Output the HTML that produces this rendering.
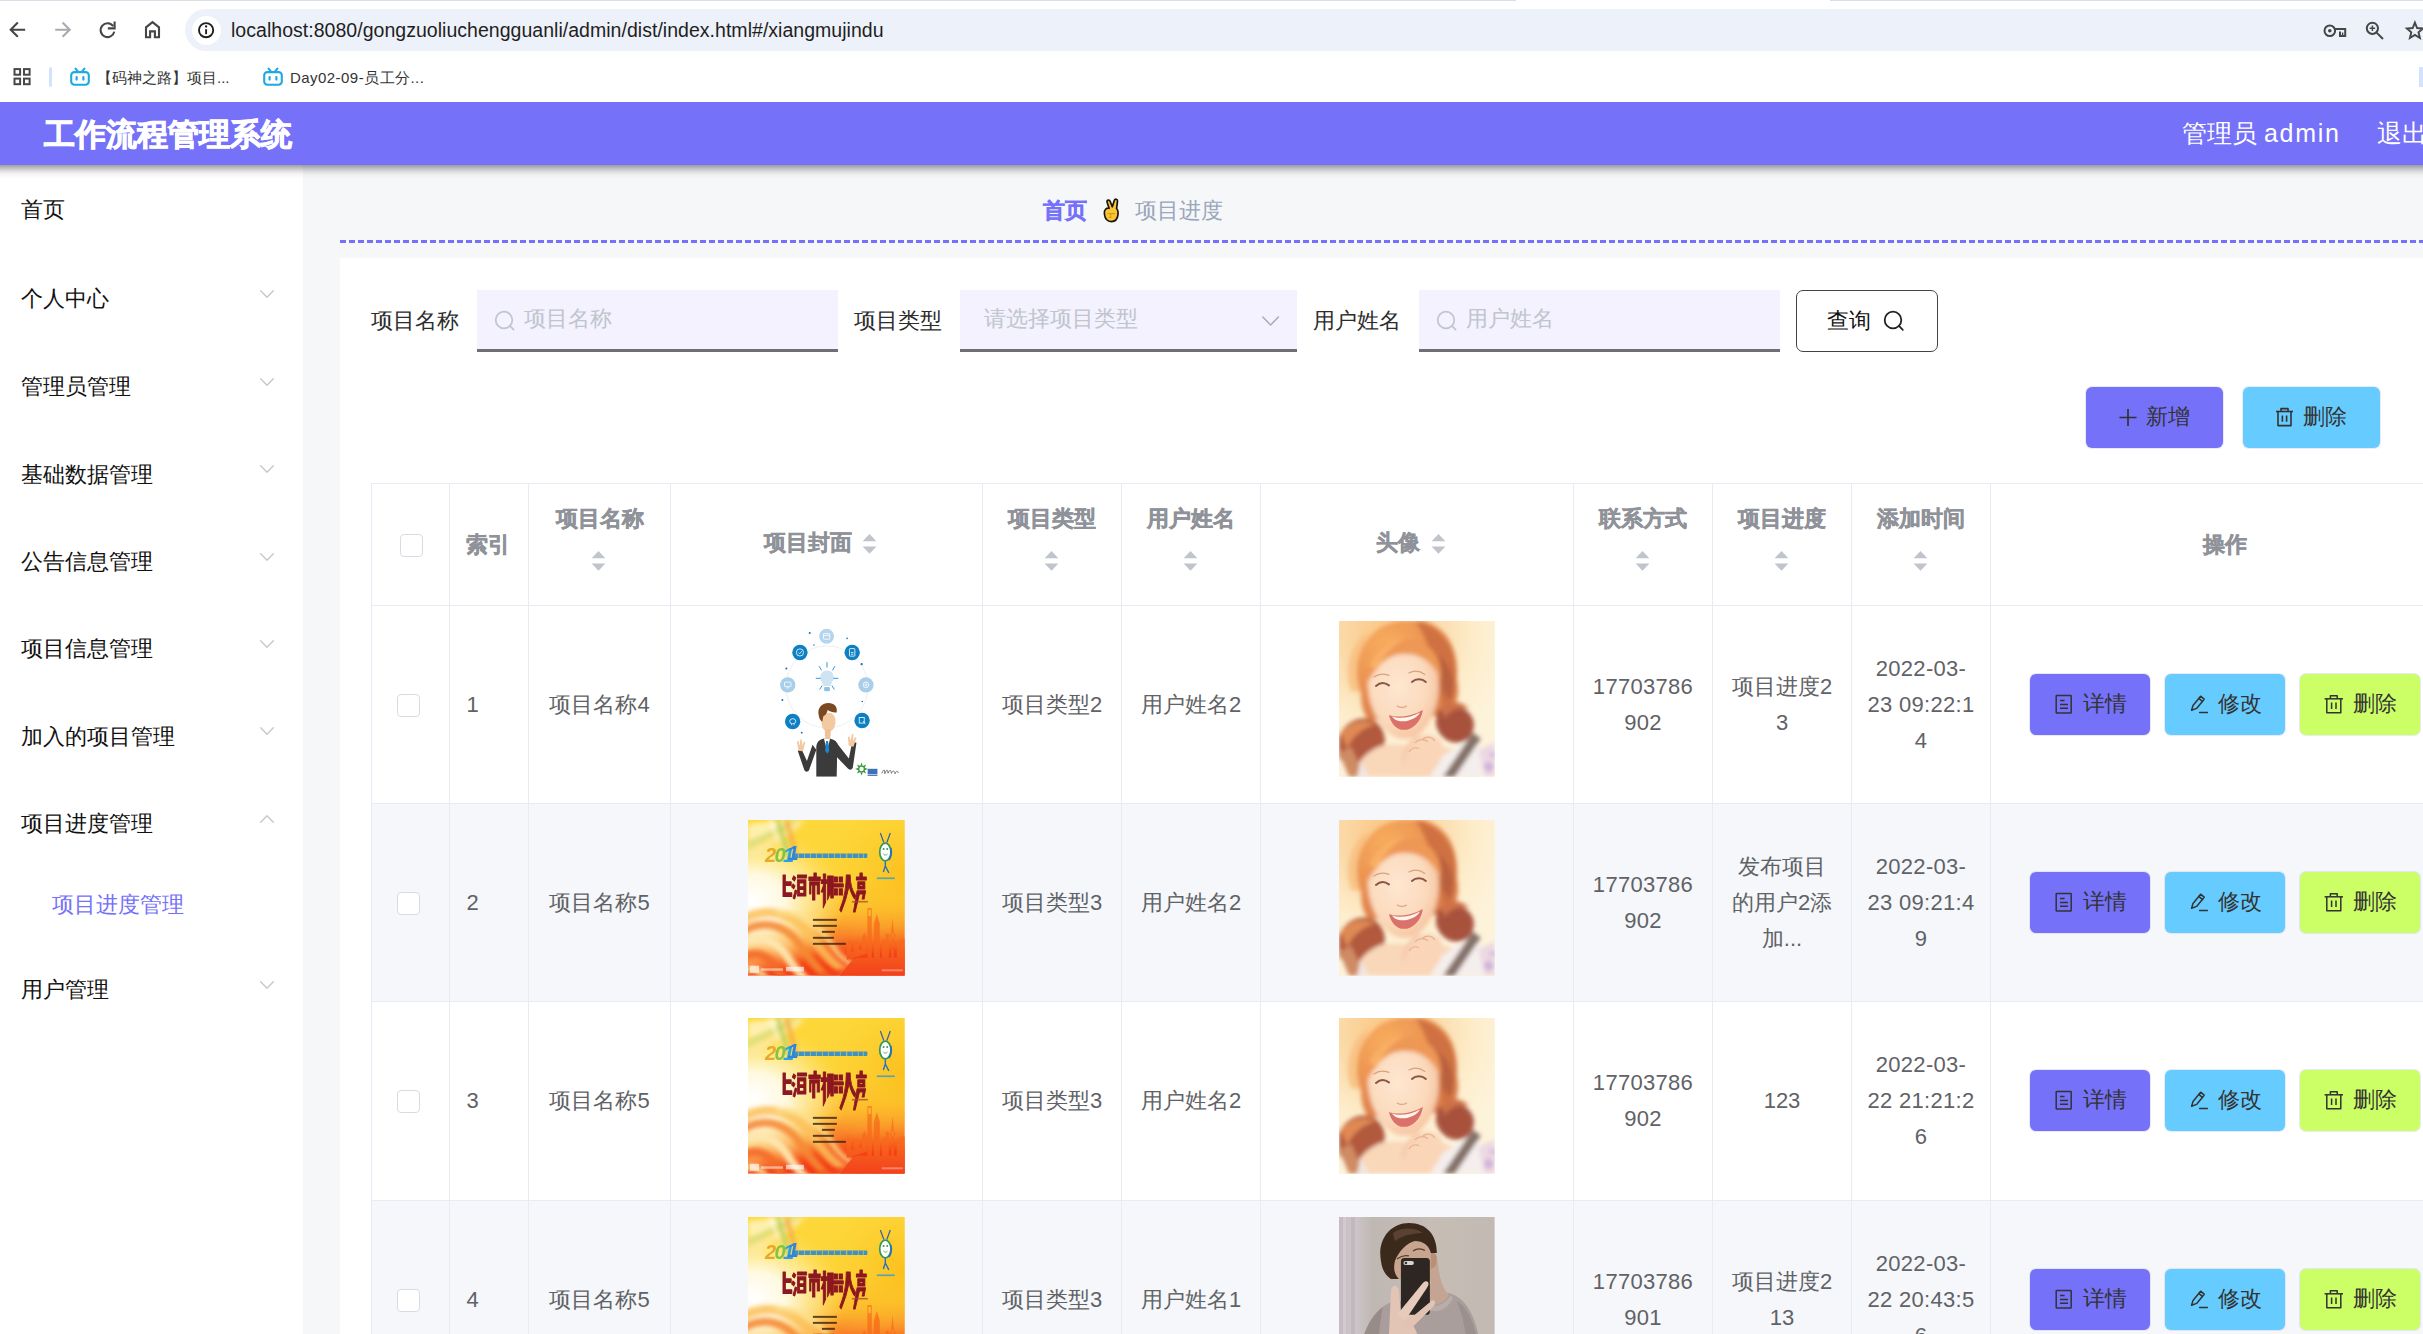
<!DOCTYPE html>
<html lang="zh">
<head>
<meta charset="utf-8">
<title>工作流程管理系统</title>
<style>
*{box-sizing:border-box;margin:0;padding:0}
html,body{width:2423px;height:1334px;overflow:hidden;background:#fff}
body{position:relative;font-family:"Liberation Sans",sans-serif;color:#333;-webkit-font-smoothing:antialiased}
.abs{position:absolute}
svg{display:block;overflow:visible}
/* ---------- browser chrome ---------- */
#topline{left:0;top:0;width:2423px;height:1px;background:#d9dde6}
#tabgap{left:1516px;top:0;width:314px;height:2px;background:#fff}
#omni{left:185px;top:9px;width:2300px;height:42px;border-radius:21px;background:#edf1fa}
#infoc{left:191.5px;top:15.5px;width:29px;height:29px;border-radius:15px;background:#fff}
#url{left:231px;top:17px;height:26px;line-height:26px;font-size:19.5px;color:#1f1f1f;white-space:nowrap;letter-spacing:0.03px}
.bm{top:67px;height:22px;line-height:22px;font-size:15px;color:#333;white-space:nowrap}
#bmsep{left:49px;top:67px;width:3px;height:20px;background:#d3e3fd;border-radius:2px}
#bmright{left:2419px;top:67px;width:6px;height:20px;background:#d3e3fd}
/* ---------- app header ---------- */
#hdr{left:-30px;top:102px;width:2483px;height:63px;background:#7571f9;box-shadow:0 1px 10px 1px rgba(0,0,0,.58);clip-path:inset(0 0 -40px 0);z-index:5}
#title{left:73.5px;top:1px;height:63px;line-height:64px;font-size:30.8px;font-weight:bold;color:#fff;white-space:nowrap;-webkit-text-stroke:0.9px #fff}
#user{left:2212px;top:1px;height:63px;line-height:61px;font-size:25px;color:#fff;white-space:nowrap}
#logout{left:2407px;top:1px;height:63px;line-height:61px;font-size:25px;color:#fff;white-space:nowrap}
/* ---------- sidebar ---------- */
#side{left:0;top:165px;width:303px;height:1169px;background:#fff}
.mi{left:21px;height:40px;line-height:40px;font-size:22px;color:#111;white-space:nowrap}
.mi.sub{left:52px;color:#7571f9}
.chev{left:260px;width:14px;height:8px}
/* ---------- main ---------- */
#main{left:303px;top:165px;width:2120px;height:1169px;background:#f6f7f9}
#crumb1{left:1043px;top:193px;height:36px;line-height:36px;font-size:22px;font-weight:bold;color:#7571f9;white-space:nowrap;-webkit-text-stroke:0.4px #7571f9}
#crumb2{left:1135px;top:193px;height:36px;line-height:36px;font-size:22px;color:#9aa6b9;white-space:nowrap}
#dash{left:340px;top:239.5px;width:2083px;height:3.5px;background:repeating-linear-gradient(90deg,#7571f9 0 6px,transparent 6px 9px)}
#card{left:340px;top:258px;width:2083px;height:1076px;background:#fff}
.lbl{top:301px;height:40px;line-height:40px;font-size:22px;color:#2c2c2c;white-space:nowrap}
.inp{top:290px;height:62px;background:#f3f2fe;border-bottom:3.2px solid #6f6f73}
.ph{top:299px;height:40px;line-height:40px;font-size:22px;color:#c0c4cc;white-space:nowrap}
#qbtn{left:1796px;top:290px;width:142px;height:62px;border:1.5px solid #444;border-radius:7px;background:#fff}
#qtxt{left:1827px;top:301px;height:40px;line-height:40px;font-size:22px;color:#111;white-space:nowrap}
.bigbtn{top:387px;width:136.5px;height:61px;border-radius:6px;box-shadow:0 0 0 1px rgba(190,195,235,.35)}
.bigtxt{top:397px;height:40px;line-height:40px;font-size:22px;color:#333;white-space:nowrap}
/* ---------- table ---------- */
#tbl{left:371px;top:484px;width:2060px;height:860px;border-top:1.5px solid #e9ebf5;border-left:1.5px solid #e9ebf5;background:#fff}
.row{left:371px;width:2060px;border-bottom:1.5px solid #e9ebf5}
.stripe{background:#f5f7fa}
.vl{top:483px;width:1px;height:860px;background:#e8eaf4}
.hl{left:371px;width:2060px;height:1px;background:#e8eaf4}
.th{height:34px;line-height:34px;font-size:22px;font-weight:bold;color:#8f9298;text-align:center;white-space:nowrap;-webkit-text-stroke:0.45px #8f9298}
.td{font-size:22px;color:#5f6266;text-align:center;line-height:36px;white-space:nowrap}
.cb{width:23px;height:23px;border:1.5px solid #d8dbe3;border-radius:4px;background:#fff}
.sort{width:14px;height:24px}
.ab{width:120px;height:61px;border-radius:6px;box-shadow:0 0 0 1px rgba(190,195,235,.35)}
.abt{height:40px;line-height:40px;font-size:22px;color:#333;white-space:nowrap}
.img{width:157px;height:157px;overflow:hidden}
</style>
</head>
<body>
<!-- ======= browser chrome ======= -->
<div class="abs" id="topline"></div><div class="abs" id="tabgap"></div>
<div class="abs" id="omni"></div>
<div class="abs" id="infoc"></div>
<div class="abs" id="url">localhost:8080/gongzuoliuchengguanli/admin/dist/index.html#/xiangmujindu</div>
<div class="abs" id="bmsep"></div><div class="abs" id="bmright"></div>
<div class="abs bm" style="left:97px">【码神之路】项目...</div>
<div class="abs bm" style="left:290px;letter-spacing:0.45px">Day02-09-员工分...</div>
<svg class="abs" style="left:0;top:0" width="2423" height="100" viewBox="0 0 2423 100" fill="none" stroke-linecap="butt" stroke-linejoin="miter">
  <!-- back -->
  <path d="M25.2 29.7H11.2M17.8 22.6L10.7 29.7L17.8 36.8" stroke="#444746" stroke-width="2.1"/>
  <!-- forward (disabled) -->
  <path d="M55.2 29.7H69.2M62.6 22.6L69.7 29.7L62.6 36.8" stroke="#a8abb0" stroke-width="2.1"/>
  <!-- reload -->
  <path d="M113.2 26.2A6.9 6.9 0 1 0 114.3 31.6" stroke="#444746" stroke-width="2.1"/>
  <path d="M114.6 21.6V28.4H107.8" stroke="#444746" stroke-width="2.1"/>
  <!-- home -->
  <path d="M146 37.2V27.3L152.5 22.2L159 27.3V37.2H154.9V31.4H150.1V37.2Z" stroke="#444746" stroke-width="2.1"/>
  <!-- info -->
  <circle cx="206.1" cy="30.2" r="7.1" stroke="#1f1f1f" stroke-width="1.9"/>
  <path d="M206.1 29.2V34.2" stroke="#1f1f1f" stroke-width="1.9"/>
  <circle cx="206.1" cy="26.5" r="1.15" fill="#1f1f1f"/>
  <!-- key -->
  <circle cx="2329.8" cy="30.8" r="5.3" stroke="#444746" stroke-width="2"/>
  <circle cx="2329.8" cy="30.8" r="1.8" fill="#444746"/>
  <path d="M2335 29H2345.2V36H2340V31.5" stroke="#444746" stroke-width="2"/>
  <path d="M2342.6 32.5V36" stroke="#444746" stroke-width="1.4"/>
  <!-- zoom -->
  <circle cx="2372.4" cy="28.3" r="5.6" stroke="#444746" stroke-width="2"/>
  <path d="M2376.6 32.6L2383 39" stroke="#444746" stroke-width="2"/>
  <path d="M2369.6 28.3H2375.2M2372.4 25.5V31.1" stroke="#444746" stroke-width="1.5"/>
  <!-- star -->
  <path d="M2414.9 22.6L2417.1 28L2422.9 28.5L2418.5 32.3L2419.9 38L2414.9 34.9L2409.9 38L2411.3 32.3L2406.9 28.5L2412.7 28Z" stroke="#444746" stroke-width="1.9" stroke-linejoin="miter"/>
  <!-- apps grid -->
  <g stroke="#474747" stroke-width="2">
    <rect x="14.5" y="69.1" width="5.6" height="5.6"/><rect x="24" y="69.1" width="5.6" height="5.6"/>
    <rect x="14.5" y="78.6" width="5.6" height="5.6"/><rect x="24" y="78.6" width="5.6" height="5.6"/>
  </g>
  <!-- bilibili icons -->
  <g id="bili" stroke="#1fa9e1" stroke-width="2.1">
    <rect x="71.2" y="72.1" width="17.6" height="12.6" rx="3.2"/>
    <path d="M75.6 68.6L78 71.6M84.4 68.6L82 71.6" stroke-linecap="round"/>
    <path d="M76.6 77V79.6M83.4 77V79.6" stroke-width="2.2" stroke-linecap="round"/>
  </g>
  <g stroke="#1fa9e1" stroke-width="2.1" transform="translate(193 0)">
    <rect x="71.2" y="72.1" width="17.6" height="12.6" rx="3.2"/>
    <path d="M75.6 68.6L78 71.6M84.4 68.6L82 71.6" stroke-linecap="round"/>
    <path d="M76.6 77V79.6M83.4 77V79.6" stroke-width="2.2" stroke-linecap="round"/>
  </g>
</svg>

<!-- ======= app ======= -->
<div class="abs" id="side"></div>
<div class="abs" id="main"></div>
<div class="abs" id="hdr">
  <div class="abs" id="title">工作流程管理系统</div>
  <div class="abs" id="user">管理员 <span style="letter-spacing:1.7px">admin</span></div>
  <div class="abs" id="logout">退出</div>
</div>
<div class="abs mi" style="top:190.1px">首页</div>
<div class="abs mi" style="top:279.0px">个人中心</div>
<svg class="abs chev" style="top:289.9px" viewBox="0 0 14 8" fill="none"><path d="M0.7 0.7L7 7.2L13.3 0.7" stroke="#c3c6cc" stroke-width="1.3" stroke-linecap="round" stroke-linejoin="round"/></svg>
<div class="abs mi" style="top:367.0px">管理员管理</div>
<svg class="abs chev" style="top:377.9px" viewBox="0 0 14 8" fill="none"><path d="M0.7 0.7L7 7.2L13.3 0.7" stroke="#c3c6cc" stroke-width="1.3" stroke-linecap="round" stroke-linejoin="round"/></svg>
<div class="abs mi" style="top:454.5px">基础数据管理</div>
<svg class="abs chev" style="top:465.4px" viewBox="0 0 14 8" fill="none"><path d="M0.7 0.7L7 7.2L13.3 0.7" stroke="#c3c6cc" stroke-width="1.3" stroke-linecap="round" stroke-linejoin="round"/></svg>
<div class="abs mi" style="top:542.1px">公告信息管理</div>
<svg class="abs chev" style="top:553.0px" viewBox="0 0 14 8" fill="none"><path d="M0.7 0.7L7 7.2L13.3 0.7" stroke="#c3c6cc" stroke-width="1.3" stroke-linecap="round" stroke-linejoin="round"/></svg>
<div class="abs mi" style="top:629.0px">项目信息管理</div>
<svg class="abs chev" style="top:639.9px" viewBox="0 0 14 8" fill="none"><path d="M0.7 0.7L7 7.2L13.3 0.7" stroke="#c3c6cc" stroke-width="1.3" stroke-linecap="round" stroke-linejoin="round"/></svg>
<div class="abs mi" style="top:716.5px">加入的项目管理</div>
<svg class="abs chev" style="top:727.4px" viewBox="0 0 14 8" fill="none"><path d="M0.7 0.7L7 7.2L13.3 0.7" stroke="#c3c6cc" stroke-width="1.3" stroke-linecap="round" stroke-linejoin="round"/></svg>
<div class="abs mi" style="top:803.7px">项目进度管理</div>
<svg class="abs chev" style="top:814.6px" viewBox="0 0 14 8" fill="none"><path d="M0.7 7.2L7 0.7L13.3 7.2" stroke="#c3c6cc" stroke-width="1.3" stroke-linecap="round" stroke-linejoin="round"/></svg>
<div class="abs mi sub" style="top:884.9px">项目进度管理</div>
<div class="abs mi" style="top:970.2px">用户管理</div>
<svg class="abs chev" style="top:981.1px" viewBox="0 0 14 8" fill="none"><path d="M0.7 0.7L7 7.2L13.3 0.7" stroke="#c3c6cc" stroke-width="1.3" stroke-linecap="round" stroke-linejoin="round"/></svg>
<!-- breadcrumb -->
<div class="abs" id="crumb1">首页</div>
<svg class="abs" style="left:1100px;top:197px" width="22" height="27" viewBox="0 0 22 27">
  <path d="M4.400 17C3.600 12.600 6.800 10.600 9.100 11.300L7.100 5.300C6.500 3 9.300 2.200 10.100 4.300L12.300 9.800L14.300 3.600C15 1.400 17.900 2 17.500 4.300L16.600 11.500C18 12.800 18.300 15 17.900 18.200C17.400 22.200 14.800 24.600 11.400 24.600C7.600 24.600 5 21.800 4.400 17Z" fill="#fbc634" stroke="#17130c" stroke-width="1.700" stroke-linejoin="round"/>
  <path d="M7.400 16.600H15.200M10.800 16.600V20.400H8.600" fill="none" stroke="#d69a1a" stroke-width="1.100"/>
</svg>
<div class="abs" id="crumb2">项目进度</div>
<div class="abs" id="dash"></div>
<div class="abs" id="card"></div>
<!-- search form -->
<div class="abs lbl" style="left:371px">项目名称</div>
<div class="abs inp" style="left:477px;width:361px"></div>
<div class="abs ph" style="left:524px">项目名称</div>
<div class="abs lbl" style="left:854px">项目类型</div>
<div class="abs inp" style="left:960px;width:337px"></div>
<div class="abs ph" style="left:984px">请选择项目类型</div>
<div class="abs lbl" style="left:1313px">用户姓名</div>
<div class="abs inp" style="left:1419px;width:361px"></div>
<div class="abs ph" style="left:1466px">用户姓名</div>
<div class="abs" id="qbtn"></div>
<div class="abs" id="qtxt">查询</div>
<div class="abs bigbtn" style="left:2086px;background:#7571f9"></div>
<div class="abs bigtxt" style="left:2146px">新增</div>
<div class="abs bigbtn" style="left:2243px;background:#66ccff"></div>
<div class="abs bigtxt" style="left:2303px">删除</div>
<svg class="abs" style="left:340px;top:258px" width="2083" height="220" viewBox="340 258 2083 220" fill="none">
  <!-- search icons in inputs -->
  <g stroke="#c0c4cc" stroke-width="1.7" stroke-linecap="round">
    <circle cx="504" cy="320" r="8.3"/><path d="M510.2 326.2L513.6 329.6"/>
    <circle cx="1446" cy="320" r="8.3"/><path d="M1452.2 326.2L1455.6 329.6"/>
  </g>
  <!-- select arrow -->
  <path d="M1262.8 317L1270.6 325L1278.4 317" stroke="#a9adb6" stroke-width="1.6" stroke-linecap="round" stroke-linejoin="round"/>
  <!-- query icon -->
  <g stroke="#222" stroke-width="1.8" stroke-linecap="round">
    <circle cx="1893" cy="320" r="8.3"/><path d="M1899.2 326.2L1902.8 329.8"/>
  </g>
  <!-- plus -->
  <path d="M2119.5 417.5H2136.5M2128 409V426" stroke="#333" stroke-width="1.7"/>
  <!-- trash -->
  <g stroke="#333" stroke-width="1.6" stroke-linejoin="round">
    <path d="M2276 411.5H2293"/><path d="M2281 411.2V408.6H2288V411.2"/>
    <path d="M2278 411.8V425.6H2291V411.8"/><path d="M2282.4 415.4V421.8M2286.6 415.4V421.8"/>
  </g>
</svg>

<svg width="0" height="0" style="position:absolute">
<defs>
  <g id="ic-doc" stroke="#333" stroke-width="1.5" stroke-linejoin="round"><rect x="1.2" y="1.4" width="15" height="17.6" rx="0.6"/><path d="M5 6.6H9.600M5 10.400H13M5 14.300H13"/></g>
  <g id="ic-edit" stroke="#333" stroke-width="1.5" stroke-linejoin="round" stroke-linecap="round"><path d="M1.6 16.2L3 11.4L10.6 2.2L14.2 5.2L6.6 14.4Z"/><path d="M8.8 4.4L12.4 7.4"/><path d="M9.6 18.6H17.4"/></g>
  <g id="ic-trash" stroke="#333" stroke-width="1.5" stroke-linejoin="round"><path d="M0.6 4.800H19"/><path d="M6.400 4.600V1.800H13.200V4.600"/><path d="M2.800 5V18.800H16.800V5"/><path d="M7.600 8.400V15M12 8.400V15"/></g>
  <filter id="b1" x="-10%" y="-10%" width="120%" height="120%"><feGaussianBlur stdDeviation="0.6"/></filter>
  <filter id="b2" x="-20%" y="-20%" width="140%" height="140%"><feGaussianBlur stdDeviation="2"/></filter>
  <filter id="b4" x="-30%" y="-30%" width="160%" height="160%"><feGaussianBlur stdDeviation="4.5"/></filter>
  <filter id="b8" x="-50%" y="-50%" width="200%" height="200%"><feGaussianBlur stdDeviation="9"/></filter>
  <clipPath id="c157"><rect width="157" height="156"/></clipPath>
  <clipPath id="c156"><rect width="156" height="156"/></clipPath>
    <g id="imgA" clip-path="url(#c157)">
    <rect width="157" height="156" fill="#fff"/>
    <g filter="url(#b1)">
    <circle cx="79" cy="66" r="41" fill="none" stroke="#e6ebf0" stroke-width="0.8"/>
    <circle cx="78.7" cy="15.3" r="7.5" fill="#b4d5ed"/>
    <circle cx="52" cy="31.5" r="7.7" fill="#0a7fc3"/>
    <circle cx="104.3" cy="31.5" r="7.7" fill="#0a7fc3"/>
    <circle cx="39.8" cy="63.9" r="7.7" fill="#a8cee9"/>
    <circle cx="118.1" cy="63.9" r="7.7" fill="#a8cee9"/>
    <circle cx="44.7" cy="100.6" r="7.7" fill="#0a7fc3"/>
    <circle cx="114.2" cy="99.6" r="7.7" fill="#0a7fc3"/>
    <g fill="none" stroke="#fff" stroke-width="0.9" opacity=".9">
      <circle cx="52" cy="31.5" r="3.6"/><path d="M50.6 31.6L51.8 32.8L53.8 30.2"/>
      <rect x="101.6" y="27.6" width="5.4" height="7.6" rx="0.6"/><path d="M103 31.5H105.6M103 33.3H105.6"/>
      <rect x="75.6" y="12.6" width="6.2" height="5.6" rx="0.5"/><path d="M75.6 14.4H81.8"/>
      <rect x="36.6" y="61.2" width="6.4" height="4.6" rx="0.5"/><path d="M38.6 67H41"/>
      <circle cx="118.1" cy="63.9" r="2.8"/><circle cx="118.1" cy="63.9" r="1"/>
      <path d="M41.8 100.4a3 2.6 0 1 0 6 0a3 2.6 0 1 0 -6 0M43.6 103.4V104.4M46.2 103.4V104.4"/>
      <rect x="111.4" y="96.6" width="5" height="5.6"/><path d="M115.2 100.2L117.4 103"/>
    </g>
    <g fill="#1a6fb0"><circle cx="61.8" cy="12" r="1"/><circle cx="99.2" cy="17.4" r="0.8"/><circle cx="38.4" cy="47.6" r="1"/><circle cx="113.8" cy="43.2" r="1.1"/><circle cx="34.4" cy="79" r="1"/><circle cx="114.4" cy="80.6" r="0.8"/><circle cx="53.8" cy="111.8" r="0.9"/><circle cx="66" cy="24" r="0.7"/></g>
    <!-- bulb -->
    <path d="M79.1 49.5c4.6 0 6.8 3.4 6.8 7c0 3.6-2.8 5.2-3.2 8.6h-7.2c-.4-3.4-3.2-5-3.2-8.6c0-3.6 2.2-7 6.800-7z" fill="#cfe4f3"/>
    <rect x="76.2" y="66" width="5.8" height="4.4" rx="1.2" fill="#8ec3e6"/>
    <g stroke="#2a9bd8" stroke-width="1" stroke-linecap="round"><path d="M79.1 41.600v4.600M71.300 45.500l2.200 3.600M86.900 45.500l-2.200 3.600M68.200 57.400h4.200M85.800 57.400h4.200M72 68.200l2-3.200M86.200 68.200l-2-3.200"/></g>
    <!-- man -->
    <path d="M68.400 156l0-30c.4-5 3.400-7.600 7.600-8.400l4.600 0c5.200.6 8.200 2.600 9.600 6.400l10.800 13.600l3.400-16.800l4.200 1l-3.600 24.600c-.6 2.600-3.200 3.200-5 1.400l-10.800-11.400l-.4 19.600z" fill="#3a3a3a"/>
    <path d="M68.400 128.800l-7.200 20.400c-1 2.200-3.800 2.200-4.800 0l-6.600-19.200l4-1.400l5.200 11.600l5.600-16.400z" fill="#3a3a3a"/>
    <path d="M76 117.600l3.200 12.400l3-12.400z" fill="#fff"/><path d="M78.200 120.200l-1 9.800l2.200 2.800l2-2.800l-1.200-9.800z" fill="#1a86c8"/>
    <g transform="translate(0 -3)"><path d="M73.600 104c0 6 2.400 9.800 6.800 9.800c4.200 0 7.200-4.200 7.200-10.400c0-5.600-3-8.600-7.200-8.600c-4.400 0-6.800 3.400-6.800 9.200z" fill="#f3c9a1"/>
    <rect x="77" y="111.600" width="5.600" height="6.800" fill="#f0c097"/>
    <path d="M70.800 97.400c-1.600-7.200 3-12.200 9.600-12.200c6.200 0 9.400 3.800 8.400 9.400c-3.200.4-6.600-.6-9-2.400c-.6 3.400-2.800 5.600-4.400 6.200l-1 5.400c-2.400-1-3.200-3.600-3.600-6.400z" fill="#7a4a22"/></g><rect x="77.400" y="109" width="5" height="9" fill="#f0c097"/>
    <path d="M50.600 130l-1.800-9.400l1.600-.4l1.400 4.600l.6-6.200l1.600 0l.4 6.200l1.600-4.200l1.400.6l-2.200 9.200z" fill="#f3c9a1"/>
    <path d="M100.800 125l-.8-9.200l1.600-.2l1 4.400l1.400-6.800l1.600.2l-.4 6.800l2-4l1.400.8l-3 9z" fill="#f3c9a1"/>
    <!-- logo -->
    <path d="M113.700 141.800l1.300 3.300l3.300-1.500l-1.500 3.300l3.300 1.300l-3.300 1.300l1.500 3.300l-3.300-1.500l-1.300 3.300l-1.300-3.300l-3.300 1.500l1.500-3.300l-3.300-1.300l3.300-1.300l-1.500-3.300l3.300 1.500z" fill="#3a9a3a"/><circle cx="113.700" cy="148.200" r="2.200" fill="#fff"/>
    <rect x="119.800" y="148" width="9.800" height="5.600" fill="#3f6fb8"/><rect x="119.800" y="154.200" width="9.800" height="0.900" fill="#3f6fb8"/>
    <path d="M134 152.600c2-5 3-4.600 3 .4c1.600-4.600 3-4.800 3.200-.6c1.600-4 3-3.600 3.400.2c1.400-3.400 3-3.400 3.600.4c1.200-3.200 2.600-3.400 3.400-.8" fill="none" stroke="#6a6a6a" stroke-width="0.9"/>
    </g>
  </g>

    <linearGradient id="gB1" x1="0" y1="0" x2="0.18" y2="1"><stop offset="0" stop-color="#fdd93c"/><stop offset=".5" stop-color="#fdd236"/><stop offset=".68" stop-color="#fcb82e"/><stop offset=".82" stop-color="#f9852a"/><stop offset=".93" stop-color="#f5501a"/><stop offset="1" stop-color="#f23a12"/></linearGradient>
  <radialGradient id="gB2" cx="0.03" cy="0.52" r="0.6" gradientTransform="translate(0 0.1) scale(1 0.8)"><stop offset="0" stop-color="#fff"/><stop offset=".35" stop-color="#fffbe8" stop-opacity=".95"/><stop offset=".7" stop-color="#fff0a8" stop-opacity=".55"/><stop offset="1" stop-color="#ffe060" stop-opacity="0"/></radialGradient>
  <radialGradient id="gB3" cx="1" cy="0.35" r="0.55"><stop offset="0" stop-color="#fcbf1c"/><stop offset="1" stop-color="#fdd232" stop-opacity="0"/></radialGradient>
  <linearGradient id="gB4" gradientUnits="userSpaceOnUse" x1="0" y1="88" x2="0" y2="156"><stop offset="0" stop-color="#f9861f"/><stop offset=".55" stop-color="#f7681e"/><stop offset="1" stop-color="#f3401a"/></linearGradient>
  <g id="imgB" clip-path="url(#c157)">
    <rect width="157" height="156" fill="url(#gB1)"/>
    <rect width="157" height="156" fill="url(#gB3)"/>
    <rect width="157" height="156" fill="url(#gB2)"/>
    <!-- top-left light streaks -->
    <g filter="url(#b2)" opacity=".8">
      <path d="M0 4L40 0H60L0 20Z" fill="#fff6c8"/><path d="M0 22L44 0H52L0 30Z" fill="#d6e08a"/>
      <path d="M0 32L50 2L54 6L0 42Z" fill="#fbe9a0"/>
      <path d="M36 0H41L50 34L47 40Z" fill="#f5a648"/><path d="M28 0H32L43 38L40 42Z" fill="#a6cf6a"/>
      <path d="M20 0H24L34 30Z" fill="#fff"/>
    </g>
    <!-- swirl bands -->
    <g filter="url(#b2)" fill="none" stroke-linecap="round">
      <path d="M-6 100C22 84 50 96 66 120C76 134 86 146 104 156" stroke="#fbbf5a" stroke-width="9" opacity=".85"/>
      <path d="M-6 112C18 98 40 106 54 128C62 140 70 150 82 160" stroke="#f58a34" stroke-width="8" opacity=".9"/>
      <path d="M-6 124C12 114 28 120 40 138C46 148 52 154 58 160" stroke="#fde8b0" stroke-width="8" opacity=".95"/>
      <path d="M-6 138C8 130 20 136 28 148C32 154 34 158 38 162" stroke="#f46a2a" stroke-width="9" opacity=".9"/>
      <path d="M-6 152C4 146 12 150 18 160" stroke="#fbd28a" stroke-width="7" opacity=".9"/>
      <path d="M30 92C56 92 74 108 86 128C94 140 106 148 124 152" stroke="#fce08a" stroke-width="5" opacity=".8"/>
    </g>
    <path d="M58 156C88 150 122 146 157 128V156Z" fill="#f3421a" opacity=".85" filter="url(#b2)"/>
    <!-- skyline -->
    <g fill="url(#gB4)" filter="url(#b1)">
      <path d="M99 140v-14l2-7l2 7v6h3v-10h5v8h3v-12l2.500-5l2.500 5v16z"/>
      <path d="M119.500 140V88h4.500v52zM120.500 90v6h2.500v-6z" opacity=".95"/>
      <path d="M126 140V104l3-10l3 10v36z"/>
      <path d="M134 140v-20h4v-6h3v26z"/>
      <path d="M143.500 140V112l1.200-14l1.200 14v28zM142 116a2.800 2.800 0 1 0 5.600 0a2.800 2.800 0 1 0-5.600 0M142.600 128a2.200 2.200 0 1 0 4.400 0a2.200 2.200 0 1 0-4.400 0"/>
      <path d="M149 140v-16h4v-5h4v21z"/>
      <path d="M92 156C100 146 104 139 110 138h47v18z"/>
    </g>
    <!-- headline -->
    <g filter="url(#b1)">
      <g transform="translate(35 0) scale(0.72 1) translate(-36 0)" fill="#8c1620" stroke="#8c1620" stroke-width="1.100" stroke-linejoin="round">
        <path d="M36 55h3.500v18h9v3.500H36zM40 62h7.500v3.500H40z"/>
        <path d="M51 56l3 2l-2 3l-3-2zM50 64l3 2l-2 3l-3-2zM50 78l3-8l2.500 1l-3 8zM56 55h13v3H56zM56 60h12v16H56zm3 3v4h6v-4zm0 6.500v4h6v-4z"/>
        <path d="M72 57h16v3.500H72zM79 53h3.500v5H79zM73 62h14v12h-3.500v-9h-3v15h-3.500V65h-2v9H73z"/>
        <path d="M89 60h8v3.500h-8zM92 54h3.500v28l-3.500 6zM89 72l3-6v6zM98 56h3.500v18l-3.500 6zM101 56h5v22h-3.500V59H101z"/>
        <path d="M107 57h5v5h-5zm7 0h5v5h-5zM106 64h14v3h-14zM107 69h5v6h-5zm7 0h5v6h-5z"/>
        <path d="M126 55h3.500c0 10 3 16 8 21l-2 3c-4-4-6-8-7.500-13c-1.500 6-5 16-11 26l-2-2c5-9 9-19 9-35z"/>
        <path d="M138 57h14v3h-14zM143 53h3.500v5H143zM140 62h10v7h-10zm3 2.500v2h4v-2zM139 71h12l-2 8h-3l1.500-5h-5l-6 18h-2.500z"/>
      </g>
      <path d="M104 81h16v1.600h-16z" fill="#a04040" opacity=".7"/>
      <!-- 2011 -->
      <g font-family="Liberation Sans, sans-serif" font-weight="bold" font-style="italic" font-size="20">
        <text x="17" y="42.500" fill="#e9a825">2</text><text x="26.500" y="42.500" fill="#86c440">0</text><text x="35" y="42.500" fill="#2f9fe0">1</text><text x="39.500" y="40" fill="#2f86d8">1</text>
      </g>
      <g fill="#2b8ad2" opacity=".9"><rect x="44.500" y="33.500" width="75" height="4.600" rx="1"/></g>
      <g fill="#fdd53a" opacity=".55"><rect x="50" y="33.500" width="1" height="4.600"/><rect x="56" y="33.500" width="1" height="4.600"/><rect x="62" y="33.500" width="1" height="4.600"/><rect x="68" y="33.500" width="1" height="4.600"/><rect x="74" y="33.500" width="1" height="4.600"/><rect x="80" y="33.500" width="1" height="4.600"/><rect x="86" y="33.500" width="1" height="4.600"/><rect x="92" y="33.500" width="1" height="4.600"/><rect x="98" y="33.500" width="1.500" height="4.600"/><rect x="104" y="33.500" width="1" height="4.600"/><rect x="110" y="33.500" width="1" height="4.600"/><rect x="115" y="33.500" width="1" height="4.600"/></g>
      <!-- small text block -->
      <g fill="#3a2410" opacity=".8"><rect x="65" y="99" width="24" height="2"/><rect x="65" y="105" width="24" height="2"/><rect x="74" y="111" width="13" height="2"/><rect x="65" y="117" width="21" height="2"/><rect x="65" y="123" width="33" height="2"/></g>
      <!-- robot logo -->
      <ellipse cx="137.500" cy="32" rx="5.600" ry="8.800" fill="#fff" stroke="#2f9a58" stroke-width="1.700"/>
      <path d="M143 28c1 5 .5 9-2 12" stroke="#2a6fc0" stroke-width="1.700" fill="none"/>
      <path d="M132.500 13l3.500 9.500M142.500 13l-3.500 9.500" stroke="#355fa8" stroke-width="1.200" fill="none"/>
      <path d="M137.500 41v5l3.500 7M137.500 46l-2 6" stroke="#2a6fc0" stroke-width="1.400" fill="none"/>
      <circle cx="135.800" cy="29" r="1" fill="#3a9a50"/><circle cx="139.400" cy="29" r="1" fill="#3a9a50"/><path d="M135.500 34c1.200 1.500 3 1.500 4.200 0" stroke="#3a9a50" stroke-width=".8" fill="none"/>
      <rect x="129" y="57.500" width="18" height="1.700" fill="#3aa0c8" opacity=".85"/>
      <!-- bottom captions -->
      <rect x="2" y="146" width="9" height="7" fill="#fff" opacity=".65"/><rect x="13" y="148.500" width="22" height="2.500" fill="#fff" opacity=".5"/><rect x="38" y="147" width="18" height="4.500" fill="#fff" opacity=".65"/>
      <rect x="134" y="149.500" width="21" height="2" fill="#fcc" opacity=".45"/>
    </g>
  </g>

    <radialGradient id="gG1" cx="0.3" cy="0.08" r="0.8"><stop offset="0" stop-color="#fbc078"/><stop offset=".35" stop-color="#fbd6a0"/><stop offset=".7" stop-color="#fdecc8"/><stop offset="1" stop-color="#fdf4dc"/></radialGradient>
  <radialGradient id="gG2" cx="0.42" cy="0.42" r="0.62"><stop offset="0" stop-color="#fee6d0"/><stop offset=".65" stop-color="#fbd8ba"/><stop offset="1" stop-color="#f5bd98"/></radialGradient>
  <radialGradient id="gG3" cx="0.3" cy="0.25" r="0.8"><stop offset="0" stop-color="#f8a64e"/><stop offset=".5" stop-color="#ea8840"/><stop offset="1" stop-color="#d87038"/></radialGradient>
  <g id="imgG" clip-path="url(#c156)">
    <rect width="156" height="156" fill="#fdf4dc"/>
    <rect width="156" height="156" fill="url(#gG1)"/>
    <g filter="url(#b2)">
      <!-- wispy hair left -->
      <path d="M12 70C4 46 12 22 30 10C22 30 22 50 26 72Z" fill="#f7b872" opacity=".8"/>
      <!-- hair back mass -->
      <path d="M22 72C10 40 26 6 60 0H86C110 8 120 30 118 58C122 74 116 88 110 94L30 100C24 92 22 84 22 72Z" fill="url(#gG3)"/>
      <path d="M76 0C100 4 118 24 117 56C116 70 112 84 106 92L96 52C92 32 86 12 76 0Z" fill="#c9602f"/>
      <path d="M100 34C112 44 118 60 112 80L104 70Z" fill="#b04e2c"/>
      <!-- pigtails -->
      <path d="M0 116C6 100 24 92 38 102C50 112 48 134 34 142C22 150 6 146 0 136Z" fill="#a8452b"/>
      <path d="M2 112C12 100 26 98 36 104C26 106 14 114 8 128Z" fill="#dc7c42"/>
      <path d="M98 92C108 80 128 84 134 98C138 110 130 122 118 122C106 122 98 112 97 102Z" fill="#9c3e29"/>
      <path d="M102 88C110 79 124 80 130 88C122 86 112 88 106 97Z" fill="#c86034"/>
      <!-- shoulders / clothes -->
      <path d="M14 156C18 140 30 128 46 124H96C112 126 128 132 140 156Z" fill="#f9d4b6"/>
      <path d="M96 140L132 118C142 124 150 138 152 156H92Z" fill="#f3eef0"/>
      <path d="M104 156L134 112L142 118L116 156Z" fill="#75605c"/>
      <path d="M0 132L12 126L26 156H10Z" fill="#c97e54"/>
      <path d="M18 156L22 140L30 156Z" fill="#efe6e6"/>
      <path d="M140 130C148 124 156 122 156 122V156H146Z" fill="#ead6e4"/>
      <circle cx="150" cy="146" r="5" fill="#cdaadc"/><circle cx="154" cy="134" r="3.500" fill="#d6b8e4"/>
      <!-- face -->
      <path d="M29 62C29 40 44 27 64 27C86 27 100 42 100 64C100 90 86 118 66 118C46 118 29 90 29 62Z" fill="url(#gG2)"/>
      <!-- fringe -->
      <path d="M27 66C24 40 40 18 66 18C90 18 104 36 102 60C96 44 84 33 66 33C48 33 36 46 27 66Z" fill="#ec8c44"/>
      <path d="M30 44C38 26 52 18 66 18C54 24 44 34 38 50Z" fill="#f8a854"/>
      <!-- hand -->
      <path d="M62 156C60 140 64 126 74 118C82 112 96 112 102 120C106 128 104 140 96 148L90 156Z" fill="#fad2b4"/>
      <path d="M64 140C66 128 72 120 80 116" stroke="#f0b898" stroke-width="2" fill="none"/>
    </g>
    <g filter="url(#b1)">
      <path d="M37 65c4-3.500 9-3.500 13-.5M73 61c4-3.500 10-3.500 14 0" stroke="#7a4030" stroke-width="2" fill="none" stroke-linecap="round"/>
      <path d="M35 56c4-3 10-3.500 15-1.500M70 52c5-2.500 11-2 16 1.500" stroke="#c07a50" stroke-width="1.200" fill="none" stroke-linecap="round" opacity=".7"/>
      <path d="M58 85c3 2 7 2 10 0" stroke="#e0a080" stroke-width="1.400" fill="none"/>
      <path d="M50 94C58 97 72 96 84 89C82 102 73 109 65 109C57 109 52 102 50 94Z" fill="#d8605a"/>
      <path d="M53 95.500C60 98 72 97 81 91.500C79 96 72 100 64 100.500C58 100.500 55 98 53 95.500Z" fill="#fff8f0"/>
      <path d="M76 122c4-4 10-4 13-1M84 118c4-3 9-2 12 2M70 131c3-4 7-5 10-3" stroke="#e4a888" stroke-width="1.300" fill="none"/>
    </g>
    <rect width="156" height="156" fill="#fff2d8" opacity=".12"/>
  </g>

    <linearGradient id="gM1" x1="0" y1="0" x2="1" y2="0"><stop offset="0" stop-color="#c4bcc0"/><stop offset=".1" stop-color="#cdc6ca"/><stop offset=".22" stop-color="#bfb7b2"/><stop offset=".6" stop-color="#c6bdb5"/><stop offset="1" stop-color="#c2b9b2"/></linearGradient>
  <g id="imgM" clip-path="url(#c156)">
    <rect width="156" height="156" fill="url(#gM1)"/>
    <rect x="4" width="3" height="156" fill="#d8d0d6" opacity=".6"/><rect x="12" width="4" height="156" fill="#b4acb0" opacity=".5"/>
    <g filter="url(#b1)">
      <!-- shirt -->
      <path d="M18 156C20 122 30 96 50 86L92 78L110 76C132 82 142 110 144 156Z" fill="#a99e9b"/>
      <path d="M18 156C20 126 28 102 44 90C40 110 38 134 40 156Z" fill="#978c88"/>
      <path d="M118 84C134 94 140 120 142 156H130C130 128 126 104 118 84Z" fill="#9b908d"/>
      <!-- neck -->
      <path d="M84 54L99 44C100 60 104 72 110 78C104 88 94 90 86 86Z" fill="#c4a594"/>
      <path d="M86 84C94 92 104 90 112 78L114 82C106 96 92 98 84 88Z" fill="#b8ada8"/>
      <!-- face -->
      <path d="M54 30C60 20 84 18 92 30C96 40 96 54 90 62L60 62C54 54 52 40 54 30Z" fill="#c9a58f"/>
      <path d="M92 36C98 34 100 42 96 50L92 52Z" fill="#b98f78"/>
      <!-- hair -->
      <path d="M42 44C38 22 52 6 70 6C88 6 98 18 98 36L92 36C90 28 84 24 76 24C68 26 60 34 56 44C54 52 56 58 60 62L52 62C46 58 43 52 42 44Z" fill="#3b2a1d"/>
      <path d="M54 16C62 10 76 10 84 16C76 16 64 18 56 24Z" fill="#5a4330"/>
      <path d="M58 42c4-3 8-4 12-3M74 34c4-2.500 9-2.500 12-.5" stroke="#5a3f30" stroke-width="1.300" fill="none"/>
      <!-- hand -->
      <path d="M30 156C34 140 42 126 50 118L52 76C52 68 58 66 60 74L62 96L86 64C90 60 94 64 90 70L72 98L92 84C96 82 98 86 94 90L74 108L78 116C74 132 60 146 52 156Z" fill="#e3c5b6"/>
      <!-- phone -->
      <rect x="62" y="41" width="29" height="57" rx="3.500" fill="#2f2721"/>
      <rect x="64.500" y="44" width="10.500" height="4" rx="2" fill="#d8d4d0"/>
      <circle cx="67" cy="46" r="1.300" fill="#3a322c"/>
      <!-- fingers over phone -->
      <path d="M58 98L84 66C88 62 92 66 88 71L66 104Z" fill="#e6cabb"/>
      <path d="M64 108L90 86C94 84 97 88 93 91L70 114Z" fill="#e1c2b3"/>
      <path d="M30 150C32 146 36 142 40 140L46 146C42 150 40 154 38 156H30Z" fill="#4a3a32"/>
      <!-- print on shirt -->
      <path d="M76 156C80 128 100 118 112 124C100 128 92 140 90 156Z" fill="#3a2e28" opacity=".0"/>
    </g>
  </g>

</defs>
</svg>

<div class="abs" style="left:371px;top:484px;width:2060px;height:860px;background:#fff"></div>
<div class="abs stripe" style="left:371px;top:803.5px;width:2060px;height:198.0px"></div>
<div class="abs stripe" style="left:371px;top:1200.5px;width:2060px;height:198.3px"></div>
<div class="abs hl" style="top:483.0px"></div>
<div class="abs hl" style="top:605.0px"></div>
<div class="abs hl" style="top:803.0px"></div>
<div class="abs hl" style="top:1001.0px"></div>
<div class="abs hl" style="top:1200.0px"></div>
<div class="abs vl" style="left:371.0px"></div>
<div class="abs vl" style="left:449.0px"></div>
<div class="abs vl" style="left:528.0px"></div>
<div class="abs vl" style="left:670.0px"></div>
<div class="abs vl" style="left:982.0px"></div>
<div class="abs vl" style="left:1121.0px"></div>
<div class="abs vl" style="left:1260.0px"></div>
<div class="abs vl" style="left:1573.0px"></div>
<div class="abs vl" style="left:1712.0px"></div>
<div class="abs vl" style="left:1851.0px"></div>
<div class="abs vl" style="left:1990.0px"></div>
<div class="abs cb" style="left:400px;top:534px"></div>
<div class="abs th" style="left:466px;top:528.0px;text-align:left">索引</div>
<div class="abs th" style="left:499.5px;top:501.6px;width:200px;">项目名称</div>
<svg class="abs" style="left:591.2px;top:550.3px" width="15" height="21" viewBox="0 0 15 21"><path d="M7.5 1L14.4 8.200H0.6Z" fill="#c0c4cc"/><path d="M7.5 20.800L14.4 13.600H0.6Z" fill="#c0c4cc"/></svg>
<div class="abs th" style="left:952.0px;top:501.6px;width:200px;">项目类型</div>
<svg class="abs" style="left:1043.7px;top:550.3px" width="15" height="21" viewBox="0 0 15 21"><path d="M7.5 1L14.4 8.200H0.6Z" fill="#c0c4cc"/><path d="M7.5 20.800L14.4 13.600H0.6Z" fill="#c0c4cc"/></svg>
<div class="abs th" style="left:1091.0px;top:501.6px;width:200px;">用户姓名</div>
<svg class="abs" style="left:1182.7px;top:550.3px" width="15" height="21" viewBox="0 0 15 21"><path d="M7.5 1L14.4 8.200H0.6Z" fill="#c0c4cc"/><path d="M7.5 20.800L14.4 13.600H0.6Z" fill="#c0c4cc"/></svg>
<div class="abs th" style="left:1543.0px;top:501.6px;width:200px;">联系方式</div>
<svg class="abs" style="left:1634.7px;top:550.3px" width="15" height="21" viewBox="0 0 15 21"><path d="M7.5 1L14.4 8.200H0.6Z" fill="#c0c4cc"/><path d="M7.5 20.800L14.4 13.600H0.6Z" fill="#c0c4cc"/></svg>
<div class="abs th" style="left:1682.0px;top:501.6px;width:200px;">项目进度</div>
<svg class="abs" style="left:1773.7px;top:550.3px" width="15" height="21" viewBox="0 0 15 21"><path d="M7.5 1L14.4 8.200H0.6Z" fill="#c0c4cc"/><path d="M7.5 20.800L14.4 13.600H0.6Z" fill="#c0c4cc"/></svg>
<div class="abs th" style="left:1821.0px;top:501.6px;width:200px;">添加时间</div>
<svg class="abs" style="left:1912.7px;top:550.3px" width="15" height="21" viewBox="0 0 15 21"><path d="M7.5 1L14.4 8.200H0.6Z" fill="#c0c4cc"/><path d="M7.5 20.800L14.4 13.600H0.6Z" fill="#c0c4cc"/></svg>
<div class="abs th" style="left:707.5px;top:526.2px;width:200px;">项目封面</div>
<svg class="abs" style="left:861.8px;top:532.5px" width="15" height="21" viewBox="0 0 15 21"><path d="M7.5 1L14.4 8.200H0.6Z" fill="#c0c4cc"/><path d="M7.5 20.800L14.4 13.600H0.6Z" fill="#c0c4cc"/></svg>
<div class="abs th" style="left:1298.2px;top:526.2px;width:200px;">头像</div>
<svg class="abs" style="left:1430.6px;top:532.5px" width="15" height="21" viewBox="0 0 15 21"><path d="M7.5 1L14.4 8.200H0.6Z" fill="#c0c4cc"/><path d="M7.5 20.800L14.4 13.600H0.6Z" fill="#c0c4cc"/></svg>
<div class="abs th" style="left:2124.8px;top:527.6px;width:200px;">操作</div>
<div class="abs cb" style="left:397px;top:694.3px"></div>
<div class="abs td" style="left:466.5px;top:686.9px;text-align:left">1</div>
<div class="abs td" style="left:449.5px;top:686.9px;width:300px;">项目名称4</div>
<svg class="abs" style="left:748.2px;top:621.0px" width="156.8" height="155.8" viewBox="0 0 157 156" preserveAspectRatio="none"><use href="#imgA"/></svg>
<div class="abs td" style="left:902.0px;top:686.9px;width:300px;">项目类型2</div>
<div class="abs td" style="left:1041.0px;top:686.9px;width:300px;">用户姓名2</div>
<svg class="abs" style="left:1339px;top:621.0px" width="155.8" height="155.8" viewBox="0 0 156 156" preserveAspectRatio="none"><use href="#imgG"/></svg>
<div class="abs td" style="left:1493.0px;top:668.9px;width:300px;letter-spacing:0.3px;">17703786<br>902</div>
<div class="abs td" style="left:1632.0px;top:668.9px;width:300px;">项目进度2<br>3</div>
<div class="abs td" style="left:1771.0px;top:650.9px;width:300px;letter-spacing:0.3px;">2022-03-<br>23 09:22:1<br>4</div>
<div class="abs ab" style="left:2030px;top:673.9px;background:#7571f9"></div>
<svg class="abs" style="left:2055.4px;top:693.5px" width="20" height="21" viewBox="0 0 20 21" fill="none"><use href="#ic-doc"/></svg>
<div class="abs abt" style="left:2083.0px;top:684.3px">详情</div>
<div class="abs ab" style="left:2165px;top:673.9px;background:#66ccff"></div>
<svg class="abs" style="left:2190.0px;top:693.5px" width="20" height="21" viewBox="0 0 20 21" fill="none"><use href="#ic-edit"/></svg>
<div class="abs abt" style="left:2217.5px;top:684.3px">修改</div>
<div class="abs ab" style="left:2300px;top:673.9px;background:#ccff66"></div>
<svg class="abs" style="left:2324.2px;top:693.5px" width="20" height="21" viewBox="0 0 20 21" fill="none"><use href="#ic-trash"/></svg>
<div class="abs abt" style="left:2352.8px;top:684.3px">删除</div>
<div class="abs cb" style="left:397px;top:892.3px"></div>
<div class="abs td" style="left:466.5px;top:884.9px;text-align:left">2</div>
<div class="abs td" style="left:449.5px;top:884.9px;width:300px;">项目名称5</div>
<svg class="abs" style="left:748.2px;top:819.8px" width="156.8" height="155.8" viewBox="0 0 157 156" preserveAspectRatio="none"><use href="#imgB"/></svg>
<div class="abs td" style="left:902.0px;top:884.9px;width:300px;">项目类型3</div>
<div class="abs td" style="left:1041.0px;top:884.9px;width:300px;">用户姓名2</div>
<svg class="abs" style="left:1339px;top:819.8px" width="155.8" height="155.8" viewBox="0 0 156 156" preserveAspectRatio="none"><use href="#imgG"/></svg>
<div class="abs td" style="left:1493.0px;top:866.9px;width:300px;letter-spacing:0.3px;">17703786<br>902</div>
<div class="abs td" style="left:1632.0px;top:848.9px;width:300px;">发布项目<br>的用户2添<br>加...</div>
<div class="abs td" style="left:1771.0px;top:848.9px;width:300px;letter-spacing:0.3px;">2022-03-<br>23 09:21:4<br>9</div>
<div class="abs ab" style="left:2030px;top:871.9px;background:#7571f9"></div>
<svg class="abs" style="left:2055.4px;top:891.5px" width="20" height="21" viewBox="0 0 20 21" fill="none"><use href="#ic-doc"/></svg>
<div class="abs abt" style="left:2083.0px;top:882.3px">详情</div>
<div class="abs ab" style="left:2165px;top:871.9px;background:#66ccff"></div>
<svg class="abs" style="left:2190.0px;top:891.5px" width="20" height="21" viewBox="0 0 20 21" fill="none"><use href="#ic-edit"/></svg>
<div class="abs abt" style="left:2217.5px;top:882.3px">修改</div>
<div class="abs ab" style="left:2300px;top:871.9px;background:#ccff66"></div>
<svg class="abs" style="left:2324.2px;top:891.5px" width="20" height="21" viewBox="0 0 20 21" fill="none"><use href="#ic-trash"/></svg>
<div class="abs abt" style="left:2352.8px;top:882.3px">删除</div>
<div class="abs cb" style="left:397px;top:1090.3px"></div>
<div class="abs td" style="left:466.5px;top:1082.9px;text-align:left">3</div>
<div class="abs td" style="left:449.5px;top:1082.9px;width:300px;">项目名称5</div>
<svg class="abs" style="left:748.2px;top:1018.0px" width="156.8" height="155.8" viewBox="0 0 157 156" preserveAspectRatio="none"><use href="#imgB"/></svg>
<div class="abs td" style="left:902.0px;top:1082.9px;width:300px;">项目类型3</div>
<div class="abs td" style="left:1041.0px;top:1082.9px;width:300px;">用户姓名2</div>
<svg class="abs" style="left:1339px;top:1018.0px" width="155.8" height="155.8" viewBox="0 0 156 156" preserveAspectRatio="none"><use href="#imgG"/></svg>
<div class="abs td" style="left:1493.0px;top:1064.9px;width:300px;letter-spacing:0.3px;">17703786<br>902</div>
<div class="abs td" style="left:1632.0px;top:1082.9px;width:300px;">123</div>
<div class="abs td" style="left:1771.0px;top:1046.9px;width:300px;letter-spacing:0.3px;">2022-03-<br>22 21:21:2<br>6</div>
<div class="abs ab" style="left:2030px;top:1069.9px;background:#7571f9"></div>
<svg class="abs" style="left:2055.4px;top:1089.5px" width="20" height="21" viewBox="0 0 20 21" fill="none"><use href="#ic-doc"/></svg>
<div class="abs abt" style="left:2083.0px;top:1080.3px">详情</div>
<div class="abs ab" style="left:2165px;top:1069.9px;background:#66ccff"></div>
<svg class="abs" style="left:2190.0px;top:1089.5px" width="20" height="21" viewBox="0 0 20 21" fill="none"><use href="#ic-edit"/></svg>
<div class="abs abt" style="left:2217.5px;top:1080.3px">修改</div>
<div class="abs ab" style="left:2300px;top:1069.9px;background:#ccff66"></div>
<svg class="abs" style="left:2324.2px;top:1089.5px" width="20" height="21" viewBox="0 0 20 21" fill="none"><use href="#ic-trash"/></svg>
<div class="abs abt" style="left:2352.8px;top:1080.3px">删除</div>
<div class="abs cb" style="left:397px;top:1289.3px"></div>
<div class="abs td" style="left:466.5px;top:1281.9px;text-align:left">4</div>
<div class="abs td" style="left:449.5px;top:1281.9px;width:300px;">项目名称5</div>
<svg class="abs" style="left:748.2px;top:1217.0px" width="156.8" height="155.8" viewBox="0 0 157 156" preserveAspectRatio="none"><use href="#imgB"/></svg>
<div class="abs td" style="left:902.0px;top:1281.9px;width:300px;">项目类型3</div>
<div class="abs td" style="left:1041.0px;top:1281.9px;width:300px;">用户姓名1</div>
<svg class="abs" style="left:1339px;top:1217.0px" width="155.8" height="155.8" viewBox="0 0 156 156" preserveAspectRatio="none"><use href="#imgM"/></svg>
<div class="abs td" style="left:1493.0px;top:1263.9px;width:300px;letter-spacing:0.3px;">17703786<br>901</div>
<div class="abs td" style="left:1632.0px;top:1263.9px;width:300px;">项目进度2<br>13</div>
<div class="abs td" style="left:1771.0px;top:1245.9px;width:300px;letter-spacing:0.3px;">2022-03-<br>22 20:43:5<br>6</div>
<div class="abs ab" style="left:2030px;top:1268.9px;background:#7571f9"></div>
<svg class="abs" style="left:2055.4px;top:1288.5px" width="20" height="21" viewBox="0 0 20 21" fill="none"><use href="#ic-doc"/></svg>
<div class="abs abt" style="left:2083.0px;top:1279.3px">详情</div>
<div class="abs ab" style="left:2165px;top:1268.9px;background:#66ccff"></div>
<svg class="abs" style="left:2190.0px;top:1288.5px" width="20" height="21" viewBox="0 0 20 21" fill="none"><use href="#ic-edit"/></svg>
<div class="abs abt" style="left:2217.5px;top:1279.3px">修改</div>
<div class="abs ab" style="left:2300px;top:1268.9px;background:#ccff66"></div>
<svg class="abs" style="left:2324.2px;top:1288.5px" width="20" height="21" viewBox="0 0 20 21" fill="none"><use href="#ic-trash"/></svg>
<div class="abs abt" style="left:2352.8px;top:1279.3px">删除</div>
</body>
</html>
